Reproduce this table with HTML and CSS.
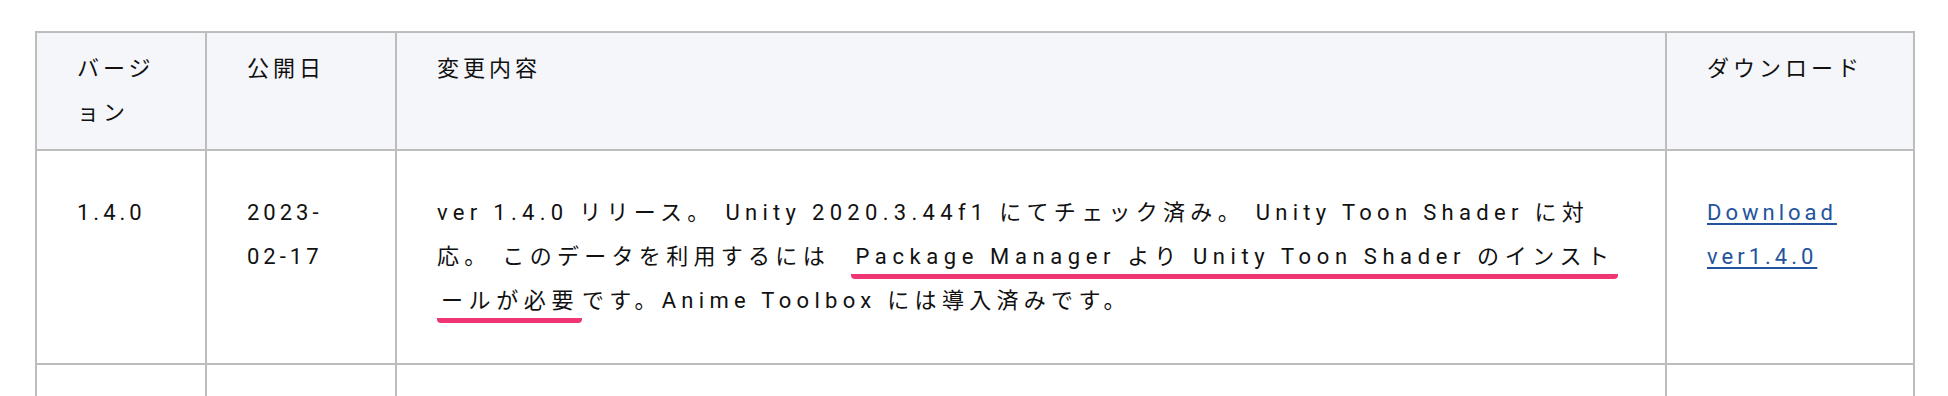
FILE: index.html
```html
<!DOCTYPE html>
<html lang="ja">
<head>
<meta charset="utf-8">
<title>バージョン履歴</title>
<link rel="stylesheet" href="styles.css">
</head>
<body>
<div class="page">
  <table class="history">
    <colgroup>
      <col class="c-ver">
      <col class="c-date">
      <col class="c-desc">
      <col class="c-dl">
    </colgroup>
    <thead>
      <tr>
        <th>バージョン</th>
        <th>公開日</th>
        <th>変更内容</th>
        <th>ダウンロード</th>
      </tr>
    </thead>
    <tbody>
      <tr>
        <td class="num">1.4.0</td>
        <td class="num">2023-02-17</td>
        <td class="desc">ver 1.4.0 リリース。 Unity 2020.3.44f1 にてチェック済み。 Unity Toon Shader に対応。 このデータを利用するには&nbsp; <span class="marker">Package Manager より Unity Toon Shader のインストールが必要</span>です。Anime Toolbox には導入済みです。</td>
        <td class="num"><a href="#" class="dl">Download ver1.4.0</a></td>
      </tr>
      <tr class="next">
        <td></td>
        <td></td>
        <td></td>
        <td></td>
      </tr>
    </tbody>
  </table>
</div>
</body>
</html>
```
FILE: styles.css
```css
html, body {
  margin: 0;
  padding: 0;
  background: #ffffff;
}

.page {
  padding: 31px 35px 0 35px;
}

.history {
  width: 1878px;
  table-layout: fixed;
  border-collapse: collapse;
  color: #111111;
  font-family: "Roboto", "Noto Sans CJK JP", sans-serif;
}

.c-ver { width: 170px; }
.c-date { width: 190px; }
.c-desc { width: 1270px; }
.c-dl { width: 248px; }

.history th,
.history td {
  border: 2px solid #bdbdbd;
  vertical-align: top;
  text-align: left;
}

.history th {
  background: #f5f6fa;
  font-weight: normal;
  font-size: 22px;
  line-height: 44px;
  letter-spacing: 4px;
  padding: 14px 40px 14px 40px;
}

.history td {
  font-size: 22px;
  line-height: 44px;
  padding: 40px 40px 40px 40px;
  letter-spacing: 4px;
}

.history td.desc {
  letter-spacing: 5.3px;
  line-break: normal;
}

.marker {
  padding: 0 3px 5px 4px;
  letter-spacing: 5.6px;
  border-bottom: 5px solid #ef3572;
  border-radius: 4px;
  -webkit-box-decoration-break: clone;
  box-decoration-break: clone;
}

.dl {
  color: #24539d;
  text-decoration: underline;
  text-decoration-thickness: 2px;
  text-underline-offset: 3px;
  letter-spacing: 4px;
}

.next td {
  height: 120px;
}
```
